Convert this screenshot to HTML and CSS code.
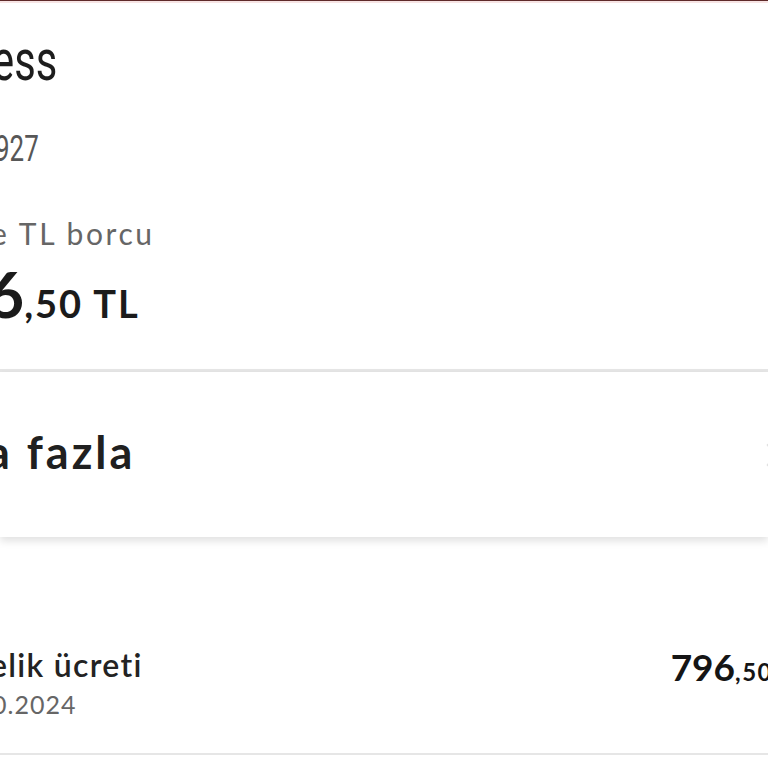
FILE: index.html
```html
<!DOCTYPE html>
<html lang="tr">

<head>
    <meta charset="UTF-8">
    <meta name="viewport" content="width=device-width, initial-scale=1.0">
    <title>Axess Kart Detay</title>
    <link rel="stylesheet" href="styles.css">
</head>

<body>
    <div class="screen">
        <!-- App header edge -->
        <div class="top-edge"></div>

        <!-- Card summary -->
        <section class="summary">
            <h1 class="card-name"><span>ess</span></h1>
            <p class="card-no"><span>927</span></p>
            <p class="debt-label">e TL borcu</p>
            <p class="debt-amount"><span class="whole">6</span>,50 TL</p>
        </section>

        <!-- More link -->
        <section class="more-card">
            <span class="more-label">a fazla</span>
            <svg class="chevron" width="14" height="24" viewBox="0 0 14 24">
                <path d="M2 2l10 10L2 22" fill="none" stroke="#e2e2e2" stroke-width="2.5" stroke-linecap="round" />
            </svg>
        </section>

        <!-- Transactions -->
        <section class="transactions">
            <div class="tx-row">
                <div class="tx-info">
                    <div class="tx-title">elik ücreti</div>
                    <div class="tx-date">0.2024</div>
                </div>
                <div class="tx-amount">796<span class="cents">,50</span></div>
            </div>
        </section>
    </div>
</body>

</html>
```

FILE: styles.css
```css
/* General Styles */
body {
    margin: 0;
    padding: 0;
    font-family: 'Lato', 'Noto Sans', sans-serif;
    background: #fff;
    color: #1d1d1d;
    overflow: hidden;
}

.screen {
    width: 768px;
    height: 768px;
    overflow: hidden;
    background: #fff;
}

.top-edge {
    height: 1px;
    background: #5e2a2a;
    border-bottom: 2px solid #f7e4e4;
}

/* Summary */
.summary {
    background: #fff;
    padding: 28px 0 0;
    height: 369px;
    box-sizing: border-box;
    border-bottom: 3px solid #e6e6e6;
}

.summary p,
.summary h1 {
    margin: 0;
}

.card-name {
    font-family: 'Roboto', sans-serif;
    font-weight: 400;
    font-size: 58px;
    line-height: 58px;
    margin-left: -8px !important;
}

.card-name span,
.card-no span {
    display: inline-block;
    transform: scaleX(0.72);
    transform-origin: left center;
}

.card-no {
    font-family: 'Roboto', sans-serif;
    font-size: 36px;
    line-height: 36px;
    color: #575757;
    margin: 42px 0 0 -5px !important;
}

.debt-label {
    font-size: 30px;
    line-height: 30px;
    color: #666;
    letter-spacing: 2.6px;
    margin: 51px 0 0 -9px !important;
}

.debt-amount {
    font-size: 38px;
    line-height: 50px;
    font-weight: 700;
    color: #1b1b1b;
    letter-spacing: 2px;
    margin: 21px 0 0 -13px !important;
}

.debt-amount .whole {
    font-size: 64px;
    letter-spacing: 0;
}

/* More card */
.more-card {
    height: 165px;
    background: #fff;
    display: flex;
    align-items: center;
    justify-content: space-between;
    box-shadow: 0 4px 8px rgba(0, 0, 0, 0.12);
    position: relative;
}

.more-label {
    font-size: 45px;
    font-weight: 700;
    color: #202020;
    letter-spacing: 3px;
    margin-left: -13px;
    margin-top: -5px;
}

.chevron {
    margin-right: -12px;
}

/* Transactions */
.transactions {
    padding-top: 110px;
}

.tx-row {
    display: flex;
    justify-content: space-between;
    align-items: flex-start;
    border-bottom: 2px solid #e6e6e6;
    height: 108px;
    box-sizing: border-box;
}

.tx-title {
    font-size: 32px;
    line-height: 36px;
    font-weight: 600;
    color: #232323;
    margin-left: -10px;
    letter-spacing: 1.3px;
}

.tx-date {
    font-size: 25px;
    line-height: 30px;
    color: #666;
    letter-spacing: 1px;
    margin-left: -8px;
    margin-top: 6px;
}

.tx-amount {
    font-size: 37px;
    line-height: 40px;
    font-weight: 700;
    color: #151515;
    margin-right: -5px;
}

.tx-amount .cents {
    font-size: 24px;
    letter-spacing: 1.5px;
}
```
